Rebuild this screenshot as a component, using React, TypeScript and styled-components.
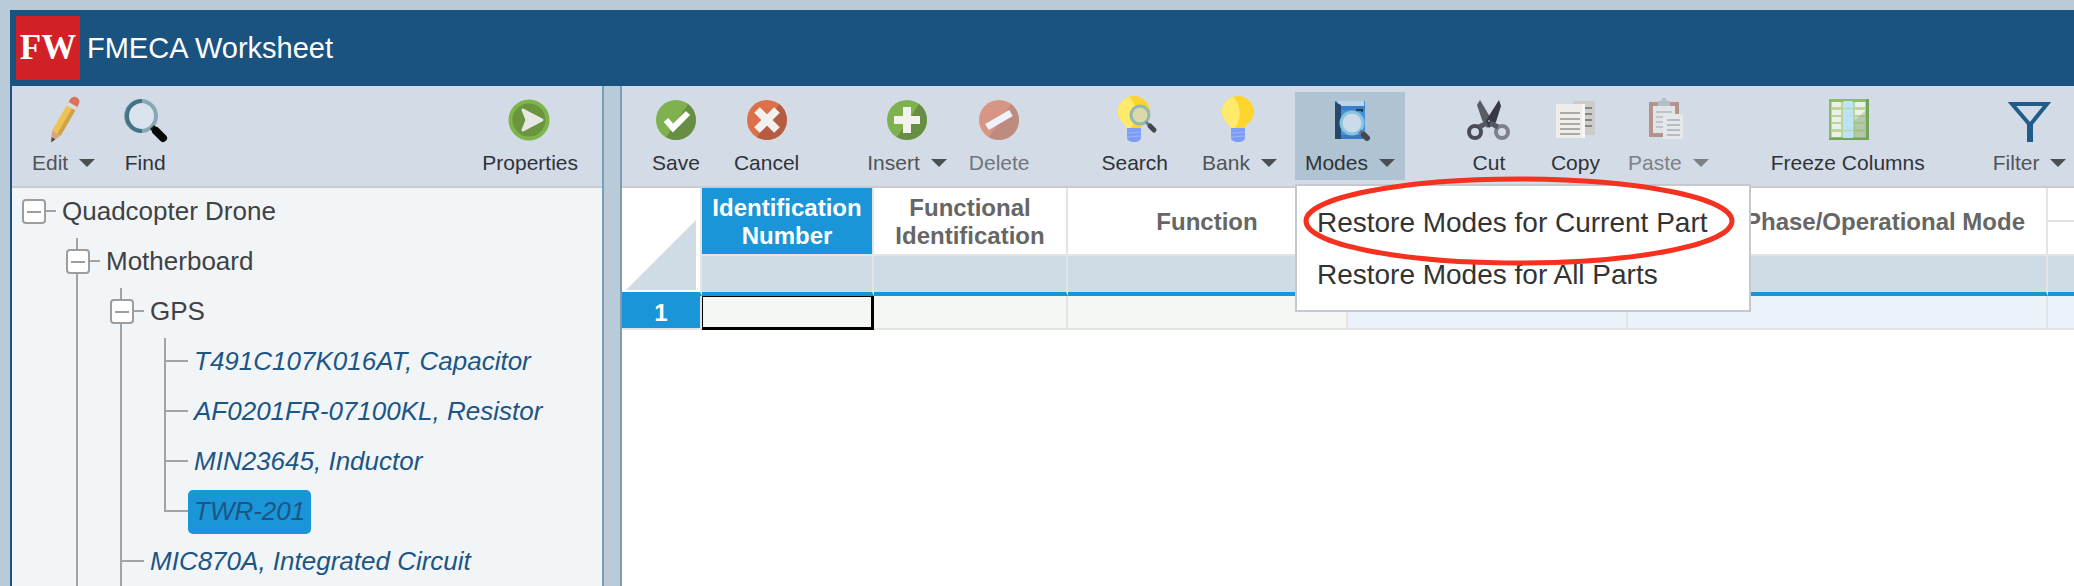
import React from 'react';
import styled, { createGlobalStyle, css } from 'styled-components';

const color = {
  frame: '#b9cbd9',
  navy: '#1a5380',
  accent: '#1a96d8',
  toolbar: '#d3dce6',
  rule: '#c9cbcc',
  grid: '#e3e4e5',
  band: '#d0dce5',
  tree: '#f1f5f8',
  line: '#a3a3a3',
};

const GlobalStyle = createGlobalStyle`
  *, *::before, *::after { box-sizing: border-box; }
  body {
    margin: 0;
    background: ${color.frame};
    font-family: "Liberation Sans", Arial, sans-serif;
    overflow: hidden;
  }
  button { font-family: inherit; }
`;

const Page = styled.div`
  height: 100vh;
  padding: 10px 0 0 10px;
`;

const Shell = styled.div`
  display: flex;
  flex-direction: column;
  height: 100%;
  border-left: 2px solid ${color.navy};
`;

const TitleBar = styled.header`
  display: flex;
  align-items: center;
  flex: none;
  gap: 7px;
  height: 76px;
  padding: 0 4px;
  background: ${color.navy};
  color: #fff;
`;

const Logo = styled.span`
  display: flex;
  align-items: center;
  justify-content: center;
  width: 64px;
  height: 64px;
  background: #d22027;
  font: bold 35px/64px "Liberation Serif", "Times New Roman", serif;
`;

const Title = styled.h1`
  margin: 0;
  font-size: 29px;
  font-weight: 400;
  line-height: 40px;
`;

const Workspace = styled.div`
  display: flex;
  flex: 1;
  min-height: 0;
`;

const Sidebar = styled.aside`
  flex: 0 0 590px;
  overflow: hidden;
  background: ${color.tree};
`;

const Splitter = styled.div`
  flex: 0 0 20px;
  background: ${color.frame};
  border: solid #7a9cb6;
  border-width: 0 2px;
`;

const Sheet = styled.main`
  flex: 1;
  min-width: 0;
  background: #fff;
`;

const Toolbar = styled.div<{ $start: number }>`
  display: flex;
  height: 102px;
  padding: 6px 14px 6px ${(p) => p.$start}px;
  background: ${color.toolbar};
  border-bottom: 2px solid ${color.rule};
`;

const Slot = styled.div<{ $gap: number; $push?: boolean }>`
  position: relative;
  flex: none;
  height: 88px;
  margin-left: ${(p) => (p.$push ? 'auto' : `${p.$gap}px`)};
`;

type Tone = 'dark' | 'soft' | 'muted' | 'faint';
const tones: Record<Tone, string> = {
  dark: '#2f3339',
  soft: '#505459',
  muted: '#707580',
  faint: '#7d8187',
};

const ToolButton = styled.button<{ $tone: Tone; $open?: boolean }>`
  display: flex;
  flex-direction: column;
  align-items: center;
  gap: 9px;
  height: 88px;
  padding: 6px 10px 5px;
  border: 0;
  background: ${(p) => (p.$open ? '#b0c3d2' : 'transparent')};
  color: ${(p) => tones[p.$tone]};
  font-size: 21px;
  line-height: 24px;
  white-space: nowrap;
`;

const Icon = styled.svg<{ $dim?: boolean }>`
  display: block;
  width: 44px;
  height: 44px;
  overflow: visible;
  opacity: ${(p) => (p.$dim ? 0.65 : 1)};
`;

const Caption = styled.span`
  display: flex;
  align-items: center;
  gap: 11px;
`;

const Caret = styled.span<{ $tone: Tone }>`
  border: solid transparent;
  border-width: 8px 8px 0;
  border-top-color: ${(p) => (p.$tone === 'faint' ? '#7d8184' : '#4c4f51')};
`;

const Menu = styled.div`
  position: absolute;
  z-index: 2;
  top: 92px;
  left: 0;
  width: 456px;
  padding: 11px 0 9px;
  background: #fff;
  border: 2px solid #c3c9cd;
`;

const MenuItem = styled.button`
  display: block;
  width: 100%;
  padding: 0 20px;
  border: 0;
  background: transparent;
  color: #333;
  font-size: 28px;
  line-height: 52px;
  text-align: left;
  white-space: nowrap;
`;

const Highlight = styled.svg`
  position: absolute;
  top: -11px;
  left: 4px;
  width: 434px;
  height: 92px;
  pointer-events: none;
`;

const Branch = styled.ul<{ $root?: boolean }>`
  margin: 0;
  padding: 0 0 0 ${(p) => (p.$root ? 20 : 44)}px;
  list-style: none;
`;

const Node = styled.li<{ $line: 'none' | 'full' | 'end' }>`
  position: relative;
  ${(p) =>
    p.$line !== 'none' &&
    css`
      &::before {
        content: '';
        position: absolute;
        top: 0;
        left: 0;
        width: 2px;
        height: ${p.$line === 'end' ? '24px' : '100%'};
        background: ${color.line};
      }
    `}
`;

const NodeRow = styled.div`
  display: flex;
  align-items: flex-start;
  height: 50px;
`;

const Toggle = styled.button`
  position: relative;
  display: flex;
  align-items: center;
  justify-content: center;
  width: 24px;
  height: 25px;
  margin: 11px 0 0 -10px;
  padding: 0;
  background: #fff;
  border: 2px solid #9d9d9d;
  border-radius: 4px;

  &::after {
    content: '';
    width: 14px;
    height: 2px;
    background: #9d9d9d;
  }
`;

const Elbow = styled.span<{ $short?: boolean }>`
  width: ${(p) => (p.$short ? 10 : 24)}px;
  height: 2px;
  margin-top: 22px;
  background: ${color.line};
`;

const Label = styled.a<{ $leaf?: boolean; $selected?: boolean }>`
  height: 44px;
  margin-top: 2px;
  padding: 0 6px;
  border-radius: 5px;
  background: ${(p) => (p.$selected ? color.accent : 'transparent')};
  color: ${(p) => (p.$leaf ? '#1d5584' : '#404144')};
  font-size: 26px;
  font-style: ${(p) => (p.$leaf ? 'italic' : 'normal')};
  line-height: 42px;
  text-decoration: none;
  white-space: nowrap;
`;

const Grid = styled.table`
  width: 100%;
  table-layout: fixed;
  border-collapse: separate;
  border-spacing: 0;

  tr > :last-child {
    border-right-width: 0;
  }
`;

const Col = styled.col<{ $w?: number }>`
  width: ${(p) => (p.$w ? `${p.$w}px` : 'auto')};
`;

const HeadCell = styled.th<{ $active?: boolean }>`
  height: 34px;
  padding: 2px 0 0;
  border: solid ${color.grid};
  border-width: 0 2px 2px 0;
  background: ${(p) => (p.$active ? color.accent : '#fff')};
  background-clip: padding-box;
  color: ${(p) => (p.$active ? '#fff' : '#666')};
  font-size: 24px;
  font-weight: 700;
  line-height: 28px;
`;

const CornerCell = styled.td`
  padding: 0 4px 2px;
  border-right: 2px solid ${color.grid};
  border-bottom: 4px solid ${color.accent};
  vertical-align: bottom;
`;

const Corner = styled.div`
  height: 70px;
  background: ${color.band};
  clip-path: polygon(100% 0, 100% 100%, 0 100%);
`;

const BandCell = styled.td`
  height: 40px;
  padding: 0;
  border-right: 2px solid ${color.grid};
  border-bottom: 4px solid ${color.accent};
  background: ${color.band};
`;

const RowHead = styled.th`
  height: 34px;
  padding: 2px 0 0;
  border: solid ${color.grid};
  border-width: 0 2px 2px 0;
  background: ${color.accent};
  background-clip: padding-box;
  color: #fff;
  font-size: 24px;
  line-height: 28px;
`;

const Cell = styled.td<{ $fill: string; $focus?: boolean }>`
  height: 34px;
  padding: 0;
  border: solid ${(p) => (p.$focus ? '#000' : color.grid)};
  border-width: ${(p) => (p.$focus ? '1px 3px 3px 1px' : '0 2px 2px 0')};
  background: ${(p) => p.$fill};
`;

const PencilIcon = () => (
  <Icon viewBox="0 0 44 44">
    <g transform="translate(22 22) rotate(30)">
      <path d="M-5-16H5V-21A5 5 0 0 0-5-21Z" fill="#d9735a" />
      <path d="M-5-18H5V-14H-5Z" fill="#d9dce0" />
      <path d="M-5-14H5V15H-5Z" fill="#efc353" />
      <path d="M1-14H5V15H1Z" fill="#cfa24c" />
      <path d="M-5 15H5L1 24H-1Z" fill="#d5a583" />
      <path d="M-2 21H2L0 26Z" fill="#55413c" />
    </g>
  </Icon>
);

const FindIcon = () => (
  <Icon viewBox="0 0 44 44">
    <circle cx="18" cy="18" r="14" fill="#d9e4ee" />
    <circle cx="18" cy="18" r="15" fill="none" stroke="#86a9b3" strokeWidth="4" />
    <path d="M19 3A15 15 0 1 0 19 33" fill="none" stroke="#457383" strokeWidth="4" />
    <path d="M29 29L34 34" stroke="#222" strokeWidth="6" />
    <path d="M33 33L40 40" stroke="#080808" strokeWidth="8" strokeLinecap="round" />
  </Icon>
);

const PropertiesIcon = () => (
  <Icon viewBox="0 0 44 44">
    <circle cx="21" cy="22" r="18.500" fill="#6b953d" stroke="#7cb54b" strokeWidth="4" />
    <path d="M15 12L34 22L15 32L19 22Z" fill="#e6e6e2" stroke="#e6e6e2" strokeWidth="3" strokeLinejoin="round" />
  </Icon>
);

const Disc = ({ light, dark, dim, children }: { light: string; dark: string; dim?: boolean; children: React.ReactNode }) => (
  <Icon viewBox="0 0 44 44" $dim={dim}>
    <circle cx="22" cy="22" r="20" fill={light} />
    <path d="M34 6A20 20 0 0 1 12 39.300Z" fill={dark} />
    {children}
  </Icon>
);

const SaveIcon = () => (
  <Disc light="#80b14f" dark="#678e43">
    <path d="M12 22L19 30L34 15" fill="none" stroke="#fff" strokeWidth="6" />
  </Disc>
);

const CancelIcon = () => (
  <Disc light="#db704b" dark="#b55d42">
    <path d="M12 12L32 32M32 12L12 32" stroke="#f3f0ee" strokeWidth="8" />
  </Disc>
);

const InsertIcon = () => (
  <Disc light="#80b14f" dark="#678e43">
    <path d="M22 9V35M9 22H35" stroke="#f1f2ee" strokeWidth="8" />
  </Disc>
);

const DeleteIcon = () => (
  <Disc light="#da7053" dark="#b3604c" dim>
    <path d="M10 29L34 15" stroke="#fff" strokeWidth="7" />
  </Disc>
);

const Bulb = () => (
  <>
    <path d="M21-2C12-2 5 5 5 14C5 23 12 24 14 30H28C30 24 37 23 37 14C37 5 30-2 21-2Z" fill="#fed52e" />
    <path d="M16-1C9 1 5 7 5 14C5 23 12 24 14 30H18C26 19 23 5 16-1Z" fill="#ffea6b" />
    <path d="M14 30H28V40C28 42 25 44 21 44C17 44 14 42 14 40Z" fill="#7d9cf8" />
    <path d="M14 35L28 34M14 39L28 38" stroke="#9eb5fb" strokeWidth="1" />
  </>
);

const SearchIcon = () => (
  <Icon viewBox="0 0 44 44">
    <Bulb />
    <circle cx="27" cy="17" r="9" fill="#dcd8aa" stroke="#8fbaad" strokeWidth="3" />
    <path d="M33 24L37 28" stroke="#777e83" strokeWidth="3" />
    <path d="M37 28L41 32" stroke="#45474a" strokeWidth="5" strokeLinecap="round" />
  </Icon>
);

const BankIcon = () => (
  <Icon viewBox="0 0 44 44">
    <Bulb />
  </Icon>
);

const ModesIcon = () => (
  <Icon viewBox="0 0 44 44">
    <path d="M7 3H37V41H7Z" fill="#438fdb" />
    <path d="M9 3H36V8H11Z" fill="#b9d5ee" />
    <path d="M12 8H37V12H12Z" fill="#397fc9" />
    <path d="M7 4L13 7V41H7Z" fill="#27476b" />
    <path d="M13 37H36V41H13Z" fill="#3978c0" />
    <path d="M28 12H34V14" stroke="#263d58" strokeWidth="2" fill="none" />
    <circle cx="24" cy="25" r="11" fill="#cbdbea" stroke="#87c3df" strokeWidth="3" />
    <path d="M32 33L36 37" stroke="#666d74" strokeWidth="4" />
    <path d="M36 37L39 40" stroke="#44484c" strokeWidth="6" strokeLinecap="round" />
  </Icon>
);

const CutIcon = () => (
  <Icon viewBox="0 0 44 44">
    <path d="M10 7L13 2L26 24L20 30L15 22Z" fill="#595b65" />
    <path d="M32 2L34 8L29 24L22 30L18 24Z" fill="#363945" />
    <circle cx="8" cy="34" r="6" fill="none" stroke="#4a4c56" strokeWidth="4" />
    <circle cx="35" cy="34" r="6" fill="none" stroke="#7e818b" strokeWidth="4" />
    <path d="M12 29L20 25M31 29L23 25" stroke="#555862" strokeWidth="5" />
    <circle cx="22" cy="23" r="1" fill="#a8abb3" />
  </Icon>
);

const CopyIcon = () => (
  <Icon viewBox="0 0 44 44">
    <path d="M20 3H42V37H20Z" fill="#ccccca" />
    <path d="M32 10H39M32 16H39M32 22H39M32 28H39" stroke="#858585" strokeWidth="2" />
    <path d="M3 6H32V40H3Z" fill="#eeedea" />
    <path d="M29 6H32V40H29Z" fill="#f8f7f5" />
    <path d="M7 15H27M7 21H27M7 26H27M7 31H27M7 36H27" stroke="#aaa9a6" strokeWidth="2" />
  </Icon>
);

const PasteIcon = () => (
  <Icon viewBox="0 0 44 44" $dim>
    <path d="M5 6H31V37H5Z" fill="#e9eaea" stroke="#a66b5d" strokeWidth="4" />
    <path d="M12 3H15A3 3 0 0 1 21 3H24V8H12Z" fill="#a5b0b5" />
    <path d="M10 14H26M10 19H17M10 24H17M10 29H17" stroke="#b4b9bc" strokeWidth="2" />
    <path d="M17 16H37V41H17Z" fill="#efefed" />
    <path d="M21 22H34M21 27H34M21 32H34M21 37H34" stroke="#a8adb0" strokeWidth="2" />
  </Icon>
);

const FreezeIcon = () => (
  <Icon viewBox="0 0 44 44">
    <path d="M3 1H43V42H3Z" fill="#8aba6d" />
    <path d="M40 1H43V42H3V40H40Z" fill="#72a45c" />
    <path d="M5 4H40V39H5Z" fill="#b9d39d" />
    {[4, 12, 19, 26, 34].map((y) => (
      <React.Fragment key={y}>
        <path d={`M6 ${y}H15V${y + 5}H6Z`} fill="#edf0e7" />
        <path d={`M17 ${y - 1}H27V${y + 6}H17Z`} fill="#bce3f5" />
        <path d={`M29 ${y}H39V${y + 5}H29Z`} fill={y > 18 ? '#d2dccb' : '#edf0e7'} />
      </React.Fragment>
    ))}
    <path d="M40 12L28 23V39H40Z" fill="#6f9f5d" opacity="0.3" />
  </Icon>
);

const FilterIcon = () => (
  <Icon viewBox="0 0 44 44">
    <path d="M4 6H39L22 27Z" fill="none" stroke="#205d8b" strokeWidth="4" />
    <path d="M22 25V44" stroke="#205d8b" strokeWidth="6" />
  </Icon>
);

interface Tool {
  name: string;
  icon: React.ReactNode;
  gap: number;
  tone?: Tone;
  caret?: boolean;
  open?: boolean;
  push?: boolean;
}

const treeTools: Tool[] = [
  { name: 'Edit', icon: <PencilIcon />, gap: 0, tone: 'soft', caret: true },
  { name: 'Find', icon: <FindIcon />, gap: 8 },
  { name: 'Properties', icon: <PropertiesIcon />, gap: 0, push: true },
];

const sheetTools: Tool[] = [
  { name: 'Save', icon: <SaveIcon />, gap: 0 },
  { name: 'Cancel', icon: <CancelIcon />, gap: 14 },
  { name: 'Insert', icon: <InsertIcon />, gap: 48, tone: 'soft', caret: true },
  { name: 'Delete', icon: <DeleteIcon />, gap: 2, tone: 'muted' },
  { name: 'Search', icon: <SearchIcon />, gap: 52 },
  { name: 'Bank', icon: <BankIcon />, gap: 14, tone: 'soft', caret: true },
  { name: 'Modes', icon: <ModesIcon />, gap: 8, caret: true, open: true },
  { name: 'Cut', icon: <CutIcon />, gap: 52 },
  { name: 'Copy', icon: <CopyIcon />, gap: 20 },
  { name: 'Paste', icon: <PasteIcon />, gap: 8, tone: 'faint', caret: true },
  { name: 'Freeze Columns', icon: <FreezeIcon />, gap: 42 },
  { name: 'Filter', icon: <FilterIcon />, gap: 48, tone: 'soft', caret: true },
];

const ModesMenu = () => (
  <Menu role="menu" aria-label="Modes">
    <MenuItem role="menuitem">Restore Modes for Current Part</MenuItem>
    <MenuItem role="menuitem">Restore Modes for All Parts</MenuItem>
    <Highlight viewBox="0 0 434 92" aria-hidden="true">
      <ellipse cx="218" cy="46" rx="213" ry="42" fill="none" stroke="#f5311f" strokeWidth="5" />
    </Highlight>
  </Menu>
);

const Tools = ({ items, start, label }: { items: Tool[]; start: number; label: string }) => (
  <Toolbar role="toolbar" aria-label={label} $start={start}>
    {items.map(({ name, icon, gap, tone = 'dark', caret, open, push }) => (
      <Slot key={name} $gap={gap} $push={push}>
        <ToolButton
          type="button"
          $tone={tone}
          $open={open}
          aria-haspopup={caret ? 'menu' : undefined}
          aria-expanded={caret ? !!open : undefined}
        >
          {icon}
          <Caption>
            {name}
            {caret && <Caret $tone={tone} />}
          </Caption>
        </ToolButton>
        {open && <ModesMenu />}
      </Slot>
    ))}
  </Toolbar>
);

interface Part {
  name: string;
  selected?: boolean;
  last?: boolean;
  children?: Part[];
}

const assembly: Part = {
  name: 'Quadcopter Drone',
  children: [
    {
      name: 'Motherboard',
      children: [
        {
          name: 'GPS',
          children: [
            { name: 'T491C107K016AT, Capacitor' },
            { name: 'AF0201FR-07100KL, Resistor' },
            { name: 'MIN23645, Inductor' },
            { name: 'TWR-201', selected: true, last: true },
          ],
        },
        { name: 'MIC870A, Integrated Circuit' },
      ],
    },
  ],
};

const TreeNode = ({ part, root }: { part: Part; root?: boolean }) => (
  <Node $line={root ? 'none' : part.last ? 'end' : 'full'}>
    <NodeRow>
      {part.children && <Toggle type="button" aria-label={`Collapse ${part.name}`} />}
      <Elbow $short={!!part.children} />
      <Label href="#" $leaf={!part.children} $selected={part.selected}>
        {part.name}
      </Label>
    </NodeRow>
    {part.children && (
      <Branch>
        {part.children.map((child) => (
          <TreeNode key={child.name} part={child} />
        ))}
      </Branch>
    )}
  </Node>
);

const GREEN = '#f3f8f2';
const BLUE = '#ebf2f9';

const Worksheet = () => (
  <Grid>
    <colgroup>
      <Col $w={80} />
      <Col $w={172} />
      <Col $w={194} />
      <Col $w={280} />
      <Col $w={280} />
      <Col $w={420} />
      <Col />
    </colgroup>
    <thead>
      <tr>
        <CornerCell rowSpan={3}>
          <Corner />
        </CornerCell>
        <HeadCell rowSpan={2} $active>
          Identification Number
        </HeadCell>
        <HeadCell rowSpan={2}>
          Functional
          <br />
          Identification
        </HeadCell>
        <HeadCell rowSpan={2}>Function</HeadCell>
        <HeadCell rowSpan={2} />
        <HeadCell rowSpan={2}>Mission Phase/Operational Mode</HeadCell>
        <HeadCell />
      </tr>
      <tr>
        <HeadCell />
      </tr>
      <tr>
        <BandCell />
        <BandCell />
        <BandCell />
        <BandCell />
        <BandCell />
        <BandCell />
      </tr>
    </thead>
    <tbody>
      <tr>
        <RowHead scope="row">1</RowHead>
        <Cell $fill={GREEN} $focus />
        <Cell $fill={GREEN} />
        <Cell $fill={GREEN} />
        <Cell $fill={BLUE} />
        <Cell $fill={BLUE} />
        <Cell $fill={BLUE} />
      </tr>
    </tbody>
  </Grid>
);

export default function App() {
  return (
    <>
      <GlobalStyle />
      <Page>
        <Shell>
          <TitleBar>
            <Logo>FW</Logo>
            <Title>FMECA Worksheet</Title>
          </TitleBar>
          <Workspace>
            <Sidebar>
              <Tools items={treeTools} start={10} label="Tree" />
              <Branch $root>
                <TreeNode part={assembly} root />
              </Branch>
            </Sidebar>
            <Splitter />
            <Sheet>
              <Tools items={sheetTools} start={20} label="Worksheet" />
              <Worksheet />
            </Sheet>
          </Workspace>
        </Shell>
      </Page>
    </>
  );
}
